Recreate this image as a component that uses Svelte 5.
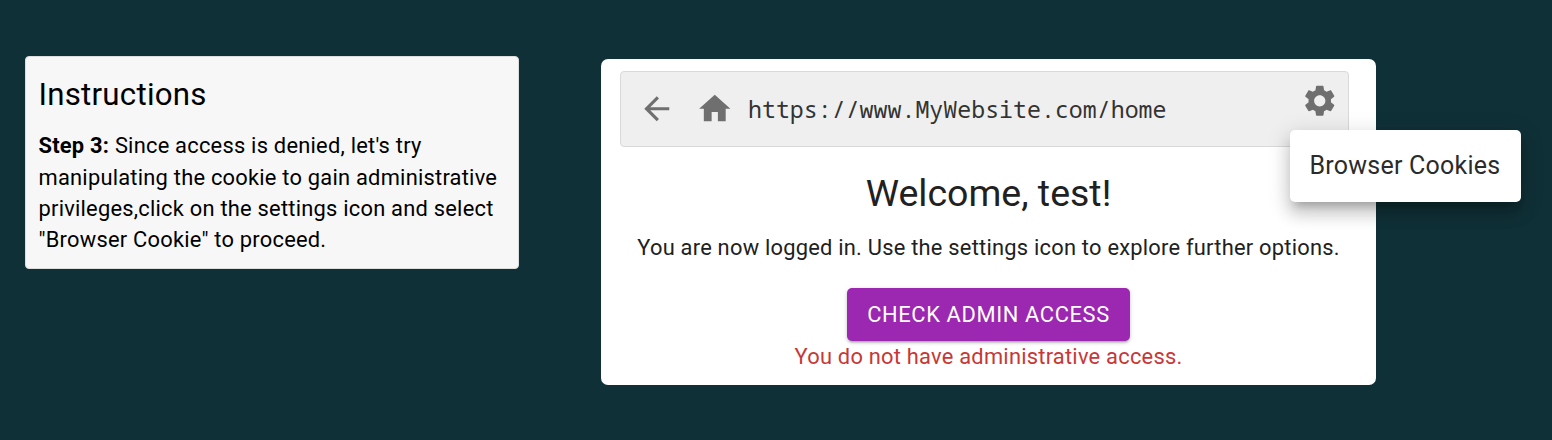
<script>
  const url = 'https://www.MyWebsite.com/home';
  const user = 'test';
</script>

<main>
  <section class="instructions">
    <h2>Instructions</h2>
    <p><strong>Step 3:</strong> Since access is denied, let's try manipulating the cookie to gain administrative privileges,click on the settings icon and select "Browser Cookie" to proceed.</p>
  </section>

  <section class="browser">
    <header>
      <svg class="back" viewBox="0 0 24 24"><path d="M20 11H7.83l5.59-5.59L12 4l-8 8 8 8 1.41-1.41L7.83 13H20v-2z" /></svg>
      <svg class="home" viewBox="0 0 24 24"><path d="M10 20v-6h4v6h5v-8h3L12 3 2 12h3v8z" /></svg>
      <span class="url">{url}</span>
      <div class="settings">
        <svg viewBox="0 0 24 24"><path d="M19.14 12.94c.04-.3.06-.61.06-.94 0-.32-.02-.64-.07-.94l2.03-1.58c.18-.14.23-.41.12-.61l-1.92-3.32c-.12-.22-.37-.29-.59-.22l-2.39.96c-.5-.38-1.03-.7-1.62-.94l-.36-2.54c-.04-.24-.24-.41-.48-.41h-3.84c-.24 0-.43.17-.47.41l-.36 2.54c-.59.24-1.13.57-1.62.94l-2.39-.96c-.22-.08-.47 0-.59.22L2.74 8.87c-.12.21-.08.47.12.61l2.03 1.58c-.05.3-.09.63-.09.94s.02.64.07.94l-2.03 1.58c-.18.14-.23.41-.12.61l1.92 3.32c.12.22.37.29.59.22l2.39-.96c.5.38 1.03.7 1.62.94l.36 2.54c.05.24.24.41.48.41h3.84c.24 0 .44-.17.47-.41l.36-2.54c.59-.24 1.13-.56 1.62-.94l2.39.96c.22.08.47 0 .59-.22l1.92-3.32c.12-.22.07-.47-.12-.61l-2.01-1.58zM12 15.6c-1.98 0-3.6-1.62-3.6-3.6s1.62-3.6 3.6-3.6 3.6 1.62 3.6 3.6-1.62 3.6-3.6 3.6z" /></svg>
        <div class="menu">Browser Cookies</div>
      </div>
    </header>
    <h1>Welcome, {user}!</h1>
    <p class="info">You are now logged in. Use the settings icon to explore further options.</p>
    <button>CHECK ADMIN ACCESS</button>
    <p class="error">You do not have administrative access.</p>
  </section>
</main>

<style>
  :global(body) {
    margin: 0;
    background: #103037;
  }
  main {
    box-sizing: border-box;
    width: 1552px;
    height: 440px;
    padding: 56px 0 0 25px;
    display: flex;
    align-items: flex-start;
    gap: 82px;
    overflow: hidden;
    background: #103037;
    font-family: Roboto, sans-serif;
  }
  h1, h2, p {
    margin: 0;
    font-weight: 400;
  }
  .instructions {
    box-sizing: border-box;
    flex: none;
    width: 494px;
    height: 213px;
    padding: 13px 12px 0 12.5px;
    border: 1px solid #ddd;
    border-radius: 4px;
    background: #f7f7f7;
    color: #000;
  }
  h2 {
    font-size: 31.25px;
    line-height: 50px;
    letter-spacing: 0.0075em;
  }
  .instructions p {
    margin-top: 10.3px;
    font-size: 21.875px;
    line-height: 31.28px;
    letter-spacing: 0.01071em;
  }
  .browser {
    box-sizing: border-box;
    flex: none;
    width: 775px;
    height: 326px;
    margin-top: 3px;
    padding: 12px 19px 0;
    display: flex;
    flex-direction: column;
    align-items: center;
    border-radius: 7px;
    background: #fff;
    color: #212121;
  }
  header {
    box-sizing: border-box;
    align-self: flex-start;
    width: 729px;
    height: 76px;
    padding: 0 10px 0 17px;
    display: flex;
    align-items: center;
    border: 1px solid #d9d9d9;
    border-radius: 4px;
    background: #efefef;
  }
  svg {
    display: block;
    flex: none;
    width: 37.5px;
    height: 37.5px;
    fill: #6f6f6f;
  }
  .home {
    margin-left: 20px;
  }
  .url {
    flex: 1;
    margin-left: 15px;
    font: 23.25px/32px 'Noto Sans Mono', 'Droid Sans Mono', 'DejaVu Sans Mono', monospace;
    color: #333;
  }
  .settings {
    position: relative;
    align-self: flex-start;
    margin-top: 10px;
  }
  .menu {
    position: absolute;
    left: -11px;
    top: 48px;
    box-sizing: border-box;
    width: 231px;
    height: 72px;
    border-radius: 5px;
    background: #fff;
    color: #2b2b2b;
    text-align: center;
    white-space: nowrap;
    font-size: 25px;
    line-height: 72px;
    letter-spacing: 0.00938em;
    box-shadow: 0 8px 8px -5px rgba(0, 0, 0, 0.2), 0 12px 16px 1px rgba(0, 0, 0, 0.14), 0 5px 22px 3px rgba(0, 0, 0, 0.12);
  }
  h1 {
    margin-top: 21px;
    font-size: 37.5px;
    line-height: 50px;
  }
  .info {
    margin-top: 14px;
    white-space: nowrap;
    font-size: 21.875px;
    line-height: 31px;
    letter-spacing: 0.01071em;
  }
  button {
    box-sizing: border-box;
    flex: none;
    width: 283px;
    height: 53px;
    margin-top: 25px;
    padding: 0;
    border: 0;
    border-radius: 5px;
    background: #9c27b0;
    color: #fff;
    white-space: nowrap;
    font: 400 21.875px/53px Roboto, sans-serif;
    letter-spacing: 0.02857em;
    box-shadow: 0 3px 2px -2px rgba(0, 0, 0, 0.2), 0 2px 3px rgba(0, 0, 0, 0.14), 0 1px 5px rgba(0, 0, 0, 0.12);
  }
  .error {
    white-space: nowrap;
    font-size: 21.875px;
    line-height: 31px;
    letter-spacing: 0.01071em;
    color: #c83737;
  }
</style>
